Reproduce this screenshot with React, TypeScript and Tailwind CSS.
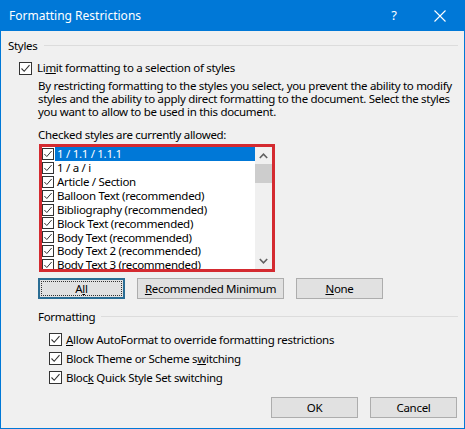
import React from "react";

const font = { fontFamily: '"Noto Sans", "Open Sans", sans-serif' };

function Check({ size = 13 }: { size?: number }) {
  return (
    <div
      className="shrink-0 bg-white border border-[#333333] flex items-center justify-center"
      style={{ width: size, height: size }}
    >
      <svg width={size - 2} height={size - 2} viewBox="0 0 11 11">
        <path d="M1.5 5.5 L4.2 8.3 L9.5 2.2" fill="none" stroke="#333333" strokeWidth="1.1" />
      </svg>
    </div>
  );
}

function Btn({ children, w, focus }: { children: React.ReactNode; w: string; focus?: boolean }) {
  return (
    <div
      className={
        "h-[21px] flex items-center justify-center bg-[#e1e1e1] text-black " +
        w +
        (focus ? " border-2 border-[#2a6d94] p-[1px]" : " border border-[#adadad]")
      }
    >
      {focus ? (
        <div className="w-full h-full border border-dotted border-[#333] flex items-center justify-center">
          {children}
        </div>
      ) : (
        children
      )}
    </div>
  );
}

const items = [
  "1 / 1.1 / 1.1.1",
  "1 / a / i",
  "Article / Section",
  "Balloon Text (recommended)",
  "Bibliography (recommended)",
  "Block Text (recommended)",
  "Body Text (recommended)",
  "Body Text 2 (recommended)",
  "Body Text 3 (recommended)",
];

export default function App() {
  return (
    <div className="w-[465px] h-[429px] flex flex-col bg-[#0078d7] text-[#000] overflow-hidden" style={font}>
      {/* Title bar */}
      <div className="h-[31px] shrink-0 flex items-center text-white">
        <div className="pl-[9px] text-[12px] leading-none flex-1 mt-[1px]">Formatting Restrictions</div>
        <div className="w-[46px] text-[13px] text-center">?</div>
        <div className="w-[46px] flex justify-center mr-[2px]">
          <svg width="12" height="12" viewBox="0 0 12 12">
            <path d="M0.5 0.5 L11.5 11.5 M11.5 0.5 L0.5 11.5" stroke="white" strokeWidth="1.1" />
          </svg>
        </div>
      </div>
      {/* Body */}
      <div className="flex-1 mx-[1px] mb-[1px] bg-[#f0f0f0] flex flex-col text-[11.5px] tracking-[-0.3px]">
        {/* Styles header */}
        <div className="mt-[7px] h-[16px] flex items-center pl-[7px]">
          <span>Styles</span>
          <div className="flex-1 h-px bg-[#dcdcdc] ml-[6px] mr-[6px] mt-[-2px]" />
        </div>
        {/* Limit checkbox */}
        <div className="mt-[6px] h-[16px] flex items-center pl-[18px] gap-[5px]">
          <Check />
          <span>
            Li<span className="underline">m</span>it formatting to a selection of styles
          </span>
        </div>
        <div className="mt-[3px] pl-[37px] leading-[13px] whitespace-nowrap">
          By restricting formatting to the styles you select, you prevent the ability to modify
          <br />
          styles and the ability to apply direct formatting to the document. Select the styles
          <br />
          you want to allow to be used in this document.
        </div>
        <div className="mt-[10px] pl-[37px] leading-[13px]">Checked styles are currently allowed:</div>
        {/* List */}
        <div className="mt-[3px] ml-[38px] w-[236px] h-[128px] border-[3px] border-[#d42a30] bg-white flex">
          <div className="flex-1 flex flex-col overflow-hidden">
            {items.map((t, i) => (
              <div key={t} className="h-[13.9px] shrink-0 flex items-center">
                <Check size={12} />
                <div
                  className={
                    "ml-[1px] flex-1 h-full flex items-center pl-[2px] leading-none whitespace-nowrap " +
                    (i === 0 ? "bg-[#0078d7] text-white" : "")
                  }
                >
                  {t}
                </div>
              </div>
            ))}
          </div>
          <div className="w-[17px] bg-[#f0f0f0] flex flex-col items-center">
            <div className="h-[17px] flex items-center justify-center">
              <svg width="9" height="6" viewBox="0 0 9 6">
                <path d="M0.8 5 L4.5 1.2 L8.2 5" fill="none" stroke="#606060" strokeWidth="1.6" />
              </svg>
            </div>
            <div className="w-[17px] h-[19px] bg-[#cdcdcd]" />
            <div className="flex-1" />
            <div className="h-[17px] flex items-center justify-center">
              <svg width="9" height="6" viewBox="0 0 9 6">
                <path d="M0.8 1 L4.5 4.8 L8.2 1" fill="none" stroke="#606060" strokeWidth="1.6" />
              </svg>
            </div>
          </div>
        </div>
        {/* Buttons */}
        <div className="mt-[6px] ml-[37px] flex gap-[12px]">
          <Btn w="w-[87px]" focus>
            <span>
              A<span className="underline">l</span>l
            </span>
          </Btn>
          <Btn w="w-[147px]">
            <span>
              <span className="underline">R</span>ecommended Minimum
            </span>
          </Btn>
          <Btn w="w-[87px]">
            <span>
              <span className="underline">N</span>one
            </span>
          </Btn>
        </div>
        {/* Formatting header */}
        <div className="mt-[10px] h-[16px] flex items-center pl-[37px]">
          <span>Formatting</span>
          <div className="flex-1 h-px bg-[#dcdcdc] ml-[6px] mr-[6px] mt-[-2px]" />
        </div>
        <div className="mt-[5px] flex flex-col pl-[48px]">
          <div className="h-[19px] flex items-center gap-[4px]">
            <Check />
            <span>
              <span className="underline">A</span>llow AutoFormat to override formatting restrictions
            </span>
          </div>
          <div className="h-[19px] flex items-center gap-[4px]">
            <Check />
            <span>
              Block Theme or Scheme s<span className="underline">w</span>itching
            </span>
          </div>
          <div className="h-[19px] flex items-center gap-[4px]">
            <Check />
            <span>
              Bloc<span className="underline">k</span> Quick Style Set switching
            </span>
          </div>
        </div>
        {/* OK / Cancel */}
        <div className="mt-[10px] flex justify-end gap-[12px] pr-[7px]">
          <Btn w="w-[87px]">OK</Btn>
          <Btn w="w-[87px]">Cancel</Btn>
        </div>
      </div>
    </div>
  );
}
